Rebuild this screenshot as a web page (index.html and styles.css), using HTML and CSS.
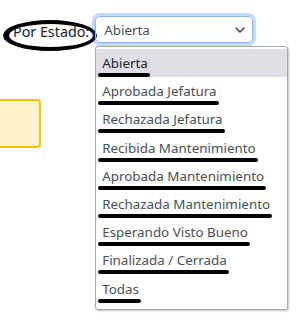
FILE: index.html
```html
<!DOCTYPE html>
<html lang="es">
<head>
    <meta charset="UTF-8">
    <meta name="viewport" content="width=device-width, initial-scale=1.0">
    <title>Filtro de solicitudes</title>
    <link rel="stylesheet" href="styles.css">
</head>
<body>

    <div class="filter-row">
        <label class="filter-label" for="estado">Por Estado:<span class="mark-ellipse"></span></label>

        <div class="select-wrap">
            <div class="select-box" id="estado">
                <span>Abierta</span>
                <svg class="chevron" width="10" height="6" viewBox="0 0 10 6">
                    <path d="M1 1 L5 5 L9 1" fill="none" stroke="#343a40" stroke-width="1.4" stroke-linecap="round" stroke-linejoin="round"/>
                </svg>
            </div>

            <!-- lista desplegada del select -->
            <ul class="dropdown">
                <li class="active"><span class="mark">Abierta</span></li>
                <li><span class="mark">Aprobada Jefatura</span></li>
                <li><span class="mark">Rechazada Jefatura</span></li>
                <li><span class="mark">Recibida Mantenimiento</span></li>
                <li><span class="mark">Aprobada Mantenimiento</span></li>
                <li><span class="mark">Rechazada Mantenimiento</span></li>
                <li><span class="mark">Esperando Visto Bueno</span></li>
                <li><span class="mark">Finalizada / Cerrada</span></li>
                <li><span class="mark">Todas</span></li>
            </ul>
        </div>
    </div>

    <div class="warning-box"></div>

</body>
</html>
```

FILE: styles.css
```css
html, body {
    min-height: 322px;
}
body {
    margin: 0;
    font-family: "Noto Sans", "Open Sans", sans-serif;
    font-size: 14px;
    color: #212529;
    background: #fff;
}
.filter-row {
    display: flex;
    align-items: center;
    padding: 16px 0 0 13px;
    gap: 6px;
}
.filter-label {
    position: relative;
    margin-top: 4px;
    font-size: 14.3px;
    color: #212529;
}
.mark-ellipse {
    position: absolute;
    left: -10px;
    top: -2px;
    width: 84px;
    height: 23px;
    border: 4px solid #000;
    border-left-width: 6px;
    border-radius: 50%;
}
.select-wrap {
    position: relative;
}
.select-box {
    display: flex;
    align-items: center;
    justify-content: space-between;
    box-sizing: border-box;
    width: 158px;
    height: 27px;
    padding: 1px 8px 0 8px;
    border: 1px solid #86b7fe;
    border-radius: 5px;
    box-shadow: 0 0 0 3px rgba(13, 110, 253, 0.25);
    font-size: 13.4px;
    color: #495057;
}
.chevron {
    margin-right: -1px;
}
.dropdown {
    position: absolute;
    z-index: 10;
    left: 0;
    top: 30px;
    width: 191px;
    margin: 0;
    padding: 2px 0 6px;
    list-style: none;
    background: #fff;
    border: 1px solid #a9a9ad;
    border-radius: 3px;
    box-shadow: 1px 1px 2px rgba(0, 0, 0, 0.25);
}
.dropdown li {
    height: 28.2px;
    line-height: 28.2px;
    padding-left: 6px;
    font-size: 13.4px;
    color: #495057;
    white-space: nowrap;
}
.dropdown li.active {
    background: #dfdee4;
    color: #212529;
}
.mark {
    position: relative;
}
.mark::after {
    content: "";
    position: absolute;
    left: -4px;
    right: -2px;
    bottom: -5px;
    height: 4px;
    background: #000;
    border-radius: 2px;
}
.warning-box {
    box-sizing: border-box;
    width: 46px;
    height: 49px;
    margin: 56px 0 0 -5px;
    background: #fff3cd;
    border: 2px solid #ffc107;
    border-radius: 4px;
}
```
